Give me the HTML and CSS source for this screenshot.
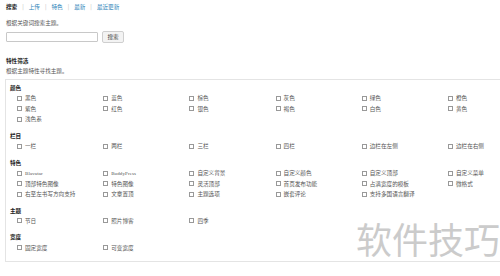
FILE: index.html
```html
<!DOCTYPE html>
<html>
<head>
    <link rel="stylesheet" href="styles.css">
</head>
<body>
    <div class="nav">
        <b>搜索</b><span class="sep">|</span>
        <a href="#">上传</a><span class="sep">|</span>
        <a href="#">特色</a><span class="sep">|</span>
        <a href="#">最新</a><span class="sep">|</span>
        <a href="#">最近更新</a>
    </div>

    <p class="intro">根据关键词搜索主题。</p>
    <form class="search-row">
        <input type="text" class="search-input">
        <button type="button" class="search-btn">搜索</button>
    </form>

    <h3 class="title">特性筛选</h3>
    <p class="desc">根据主题特性寻找主题。</p>

    <div class="filter-box">
        <div class="group">
            <h4>颜色</h4>
            <div class="options">
                <label><span class="cb"></span>黑色</label>
                <label><span class="cb"></span>蓝色</label>
                <label><span class="cb"></span>棕色</label>
                <label><span class="cb"></span>灰色</label>
                <label><span class="cb"></span>绿色</label>
                <label><span class="cb"></span>橙色</label>
                <label><span class="cb"></span>紫色</label>
                <label><span class="cb"></span>红色</label>
                <label><span class="cb"></span>银色</label>
                <label><span class="cb"></span>褐色</label>
                <label><span class="cb"></span>白色</label>
                <label><span class="cb"></span>黄色</label>
                <label><span class="cb"></span>浅色系</label>
            </div>
        </div>
        <div class="group">
            <h4>栏目</h4>
            <div class="options">
                <label><span class="cb"></span>一栏</label>
                <label><span class="cb"></span>两栏</label>
                <label><span class="cb"></span>三栏</label>
                <label><span class="cb"></span>四栏</label>
                <label><span class="cb"></span>边栏在左侧</label>
                <label><span class="cb"></span>边栏在右侧</label>
            </div>
        </div>
        <div class="group">
            <h4>特色</h4>
            <div class="options">
                <label><span class="cb"></span><span class="latin">Blavatar</span></label>
                <label><span class="cb"></span><span class="latin">BuddyPress</span></label>
                <label><span class="cb"></span>自定义背景</label>
                <label><span class="cb"></span>自定义颜色</label>
                <label><span class="cb"></span>自定义顶部</label>
                <label><span class="cb"></span>自定义菜单</label>
                <label><span class="cb"></span>顶部特色图像</label>
                <label><span class="cb"></span>特色图像</label>
                <label><span class="cb"></span>灵活顶部</label>
                <label><span class="cb"></span>首页发布功能</label>
                <label><span class="cb"></span>占满宽度的模板</label>
                <label><span class="cb"></span>微格式</label>
                <label><span class="cb"></span>右至左书写方向支持</label>
                <label><span class="cb"></span>文章置顶</label>
                <label><span class="cb"></span>主题选项</label>
                <label><span class="cb"></span>嵌套评论</label>
                <label><span class="cb"></span>支持多国语言翻译</label>
            </div>
        </div>
        <div class="group">
            <h4>主题</h4>
            <div class="options">
                <label><span class="cb"></span>节日</label>
                <label><span class="cb"></span>照片博客</label>
                <label><span class="cb"></span>四季</label>
            </div>
        </div>
        <div class="group">
            <h4>宽度</h4>
            <div class="options">
                <label><span class="cb"></span>固定宽度</label>
                <label><span class="cb"></span>可变宽度</label>
            </div>
        </div>
    </div>

    <div class="watermark">软件技巧</div>
</body>
</html>
```

FILE: styles.css
```css
body {
    margin: 0;
    width: 500px;
    height: 276px;
    overflow: hidden;
    position: relative;
    background: #fff;
    font-family: "Noto Sans CJK SC", "Noto Sans", sans-serif;
    font-size: 5.6px;
    color: #555;
}
.nav {
    display: flex;
    gap: 5px;
    padding: 4px 0 0 6px;
    height: 6px;
    line-height: 6px;
}
.nav b {
    color: #222;
}
.nav a {
    color: #2a7fb8;
    text-decoration: none;
}
.nav .sep {
    color: #bbb;
}
.intro {
    margin: 10px 0 0;
    padding-left: 6px;
    line-height: 6px;
}
.search-row {
    display: flex;
    align-items: center;
    gap: 4px;
    margin: 5px 0 0;
    padding-left: 6px;
}
.search-input {
    box-sizing: border-box;
    width: 92px;
    height: 10.5px;
    margin: 0;
    padding: 0;
    border: 1px solid #c8c8c8;
    border-radius: 1px;
    background: #fff;
}
.search-btn {
    box-sizing: border-box;
    width: 22px;
    height: 11.5px;
    margin: 0;
    padding: 0;
    border: 1px solid #cfcfcf;
    border-radius: 2px;
    background: #f3f3f3;
    font-family: inherit;
    font-size: 5.6px;
    color: #444;
}
.title {
    margin: 15px 0 0;
    padding-left: 6px;
    line-height: 6px;
    font-size: 5.6px;
    color: #222;
}
.desc {
    margin: 4px 0 0;
    padding-left: 6px;
    line-height: 6px;
}
.filter-box {
    box-sizing: border-box;
    margin: 5px 0 0 5px;
    width: 495px;
    border: 1px solid #e4e4e4;
    border-right: none;
    padding: 3.7px 0 8px 4px;
}
.group + .group {
    margin-top: 6.3px;
}
.group h4 {
    margin: 0;
    height: 10px;
    line-height: 10px;
    font-size: 5.6px;
    color: #222;
}
.options {
    display: grid;
    grid-template-columns: repeat(5, 86.2px) auto;
    grid-auto-rows: 10.5px;
    padding-left: 7px;
}
.options label {
    display: flex;
    align-items: center;
    gap: 3px;
    white-space: nowrap;
}
.cb {
    box-sizing: border-box;
    width: 5px;
    height: 5px;
    border: 1px solid #999;
    background: #fff;
}
.latin {
    font-family: "Liberation Serif", serif;
    font-size: 5px;
    letter-spacing: 0.1px;
}
.watermark {
    position: absolute;
    left: 350px;
    top: 216px;
    width: 144px;
    padding-left: 6px;
    line-height: 44px;
    font-size: 36px;
    color: #cbcbcb;
    background: #fff;
}
```
